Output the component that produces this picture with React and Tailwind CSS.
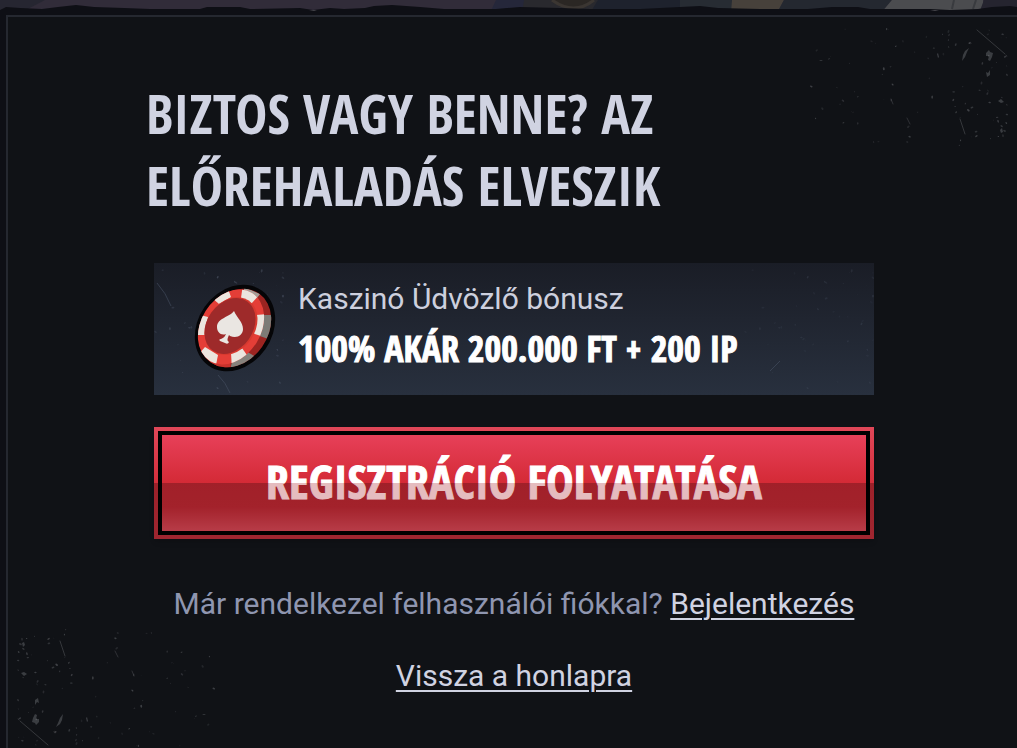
const HEADING_FONT = "font-['Open_Sans_Condensed','Roboto_Condensed','Liberation_Sans',sans-serif]";

// small pseudo random generator so the dust stays the same on every render
function makeSpecks(count, seed, width, height, pull) {
    let s = seed;
    const next = () => {
        s = (s * 16807) % 2147483647;
        return s / 2147483647;
    };
    return Array.from({ length: count }, () => {
        const x = width * (1 - Math.pow(next(), pull));
        const y = height * Math.pow(next(), 1.3);
        const r = 0.4 + next() * 1.2;
        return { x, y, r, tilt: next() * 180, opacity: 0.1 + next() * 0.25 };
    });
}

const cornerSpecks = makeSpecks(95, 4217, 200, 125, 2);
const cardSpecks = makeSpecks(46, 991, 130, 128, 1);

function Specks({ items, color }) {
    return items.map((item, i) => (
        <ellipse
            key={i}
            cx={item.x}
            cy={item.y}
            rx={item.r}
            ry={item.r * 0.6}
            fill={color}
            opacity={item.opacity}
            transform={`rotate(${item.tilt} ${item.x} ${item.y})`}
        />
    ));
}

function CornerDust({ className }) {
    return (
        <svg className={className} width="210" height="130" viewBox="0 0 210 130" aria-hidden="true">
            <Specks items={cornerSpecks} color="#9a9da3" />
            <g fill="none" stroke="#8a8d93" strokeLinecap="round">
                <path d="M170 3 L184 15 L198 27" opacity="0.3" />
                <path d="M153 92 L158 107" opacity="0.3" />
                <path d="M84 72 L86 77 M100 91 L103 97" opacity="0.25" />
            </g>
            <g fill="#8a8d93" opacity="0.35">
                <path d="M179 26 l3 -3 1 2 3 1 -1 4 -2 4 -2 -1 1 -4 -3 0 z" />
                <path d="M158 24 l4 -3 -2 4 -2 5 -3 4 1 -6 z" />
                <path d="M179 45 l2 1 2 -3 0 5 -3 2 z" />
                <path d="M191 74 l3 -2 3 3 -3 1 z M193 103 l2 -2 1 4 -2 1 z" />
                <path d="M131 26 l1 4 -1 1 -1 -4 z M12 33 l4 0 -2 1 z" />
            </g>
        </svg>
    );
}

function TopStrip() {
    return (
        <svg className="block w-full h-[13px]" viewBox="0 0 1017 13" preserveAspectRatio="none" aria-hidden="true">
            <rect width="1017" height="13" fill="#312c39" />
            <path d="M0 0 H45 L20 13 H0 Z" fill="#262631" />
            <path d="M496 0 H548 V13 H490 Z" fill="#25273a" />
            <path d="M524 0 H680 V13 H522 Z" fill="#29292e" />
            <path d="M552 0 Q574 16 594 0" fill="#2b2724" stroke="#3b3632" strokeWidth="3" />
            <path d="M598 0 H680 V13 H590 Z" fill="#1e222d" />
            <path d="M680 0 H732 V13 H680 Z" fill="#272c33" />
            <path d="M732 0 H784 L777 13 H731 Z" fill="#47413b" />
            <path d="M784 0 H892 L881 13 H777 Z" fill="#242830" />
            <path d="M892 0 H983 V13 H881 Z" fill="#4b4c4f" />
            <path d="M954 0 L952 9 M976 0 L973 9" stroke="#393b3f" strokeWidth="2" />
            <path d="M984 0 H1017 V13 H979 Z" fill="#25242f" />
            {/* torn paper edge */}
            <path
                d="M0 10 L6 7 L20 8 L42 9 L58 7 L76 5 L94 7 L124 8 L150 9 L200 9 L207 7 L240 7 L250 9 L300 8 L313 10 L330 8 L344 9 L365 8 L374 6 L392 5 L420 7 L444 9 L496 9 L520 7 L560 8 L590 9 L640 9 L680 7 L700 6 L718 8 L760 9 L808 9 L832 7 L858 7 L870 9 L930 9 L950 10 L978 9 L992 7 L1010 6 L1017 7 V13 H0 Z"
                fill="#0e0f15"
            />
            <path d="M309 10 l8 0 -3 1 z M930 10 l9 0 -4 1 z" fill="#45454b" />
        </svg>
    );
}

function PokerChip() {
    return (
        <svg className="relative w-[82px] h-[90px] shrink-0" viewBox="0 0 82 90" aria-hidden="true">
            <defs>
                <clipPath id="chip-side">
                    <ellipse cx="41" cy="44" rx="33" ry="42" transform="rotate(35 41 44)" />
                </clipPath>
                <clipPath id="chip-face">
                    <ellipse cx="37" cy="43" rx="30" ry="40" transform="rotate(32 37 43)" />
                </clipPath>
            </defs>
            <ellipse cx="41" cy="44" rx="37" ry="46" transform="rotate(35 41 44)" fill="#050507" />
            <g clipPath="url(#chip-side)">
                <rect width="82" height="90" fill="#9b2421" />
                <path d="M62 31 L82 31 L80 57 L60 50 Z" fill="#7d7b76" />
                <path d="M40 70 L50 66 L62 73 L46 90 L36 86 Z" fill="#85817b" />
                <path d="M50 3 L66 10 L60 18 L50 12 Z" fill="#a39f99" />
                <path d="M0 45 L36 70 L37 90 H0 Z" fill="#c9322c" />
            </g>
            <g clipPath="url(#chip-face)">
                <rect width="82" height="90" fill="#e43e37" />
                <g fill="#ebe5de">
                    <path d="M49 0 L66 10 L57 20 L47 14 Z" />
                    <path d="M62 31 L76 30 L73 54 L58 49 Z" />
                    <path d="M37 69 L48 64 L55 74 L38 86 Z" />
                    <path d="M11 63 L24 71 L21 86 L2 73 Z" />
                    <path d="M2 30 L14 33 L11 51 L0 51 Z" />
                    <path d="M17 13 L33 2 L37 13 L25 20 Z" />
                </g>
            </g>
            <ellipse cx="37" cy="42" rx="24" ry="31" transform="rotate(35 37 42)" fill="#d8392f" />
            <ellipse cx="36" cy="42" rx="23" ry="30" transform="rotate(35 36 42)" fill="#9e2a2a" />
            <path
                d="M40 27 C43 34 49 38 49 45 C49 51 43 55 36 52 L35 51 C33 55 33 57 35 58 C34 60 33 60 31 59 L26 57 C25 56 25 55 27 55 C30 54 31 52 32 50 C27 52 23 48 23 43 C23 34 36 33 40 27 Z"
                fill="#eae6e2"
            />
        </svg>
    );
}

function BonusCard() {
    return (
        <section className="relative flex items-center h-[132px] pl-10 bg-linear-to-b from-[#1a1d26] to-[#28303e]">
            <svg className="absolute inset-0 w-full h-full" viewBox="0 0 720 132" aria-hidden="true">
                <Specks items={cardSpecks} color="#77839a" />
                <g transform="translate(590 0)" opacity="0.5">
                    <Specks items={cardSpecks} color="#77839a" />
                </g>
                <path d="M3 20 Q12 30 17 43 M64 112 Q72 120 76 130 M616 108 L626 98" stroke="#465063" fill="none" opacity="0.6" />
            </svg>
            <PokerChip />
            <div className="relative ml-[22px]">
                <p className="text-[30px] leading-10 text-[#cdd0de]">Kaszinó Üdvözlő bónusz</p>
                <p className={`${HEADING_FONT} text-[36px] leading-[60px] font-bold text-white [-webkit-text-stroke:1px_white]`}>
                    100% AKÁR 200.000 FT + 200 IP
                </p>
            </div>
        </section>
    );
}

function ContinueButton() {
    return (
        <button
            type="button"
            className="mt-8 block w-full h-28 p-1 cursor-pointer bg-[linear-gradient(to_bottom,#e04758_0%,#d42f3c_50%,#9c212a_50%,#9f2630_100%)] shadow-md"
        >
            <span className="relative flex h-full w-full items-center justify-center border-4 border-black bg-[linear-gradient(to_bottom,#e74059_0%,#d42a36_50%,#a22a32_50%,#a52c35_75%,#c1505c_100%)]">
                <span className={`${HEADING_FONT} pb-1 text-[46px] leading-[64px] font-bold text-white [-webkit-text-stroke:1px_white]`}>
                    REGISZTRÁCIÓ FOLYATATÁSA
                </span>
                {/* gloss line, dims the lower half together with the label */}
                <span className="absolute inset-x-0 bottom-0 h-1/2 bg-[#9f0714]/27" />
            </span>
        </button>
    );
}

export default function App() {
    return (
        <div className="min-h-screen flex flex-col overflow-hidden bg-[#0e0f15] font-[Roboto,'Liberation_Sans',sans-serif]">
            <TopStrip />
            <main className="relative flex-1 mt-[2px] ml-[6px] border-t-2 border-l-2 border-[#252830] bg-[#101216] pl-[3px]">
                <CornerDust className="absolute top-[10px] right-0" />
                <CornerDust className="absolute bottom-0 left-0 rotate-180" />
                <div className="relative mx-auto w-full max-w-[720px] pb-10">
                    <h1 className={`${HEADING_FONT} -ml-2 pt-[60px] text-[54px] leading-[72px] font-bold text-[#d0d3e2]`}>
                        BIZTOS VAGY BENNE? AZ ELŐREHALADÁS ELVESZIK
                    </h1>
                    <div className="mt-[42px]">
                        <BonusCard />
                        <ContinueButton />
                    </div>
                    <p className="mt-[45px] text-center text-[30px] leading-10 text-[#8f96b0]">
                        Már rendelkezel felhasználói fiókkal?{' '}
                        <a href="#login" className="text-[#d0d3e2] underline decoration-2 underline-offset-4">Bejelentkezés</a>
                    </p>
                    <p className="mt-8 text-center text-[30px] leading-10">
                        <a href="#home" className="text-[#d0d3e2] underline decoration-2 underline-offset-4">Vissza a honlapra</a>
                    </p>
                </div>
            </main>
        </div>
    );
}
